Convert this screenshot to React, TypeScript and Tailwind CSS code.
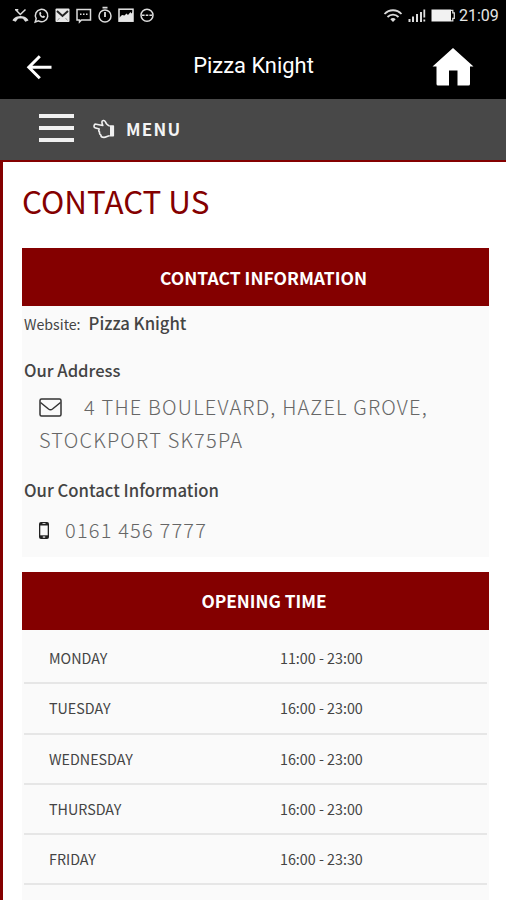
import React from 'react';

const openingTimes = [
  { day: 'MONDAY', hours: '11:00 - 23:00' },
  { day: 'TUESDAY', hours: '16:00 - 23:00' },
  { day: 'WEDNESDAY', hours: '16:00 - 23:00' },
  { day: 'THURSDAY', hours: '16:00 - 23:00' },
  { day: 'FRIDAY', hours: '16:00 - 23:30' },
];

function StatusIcons() {
  return (
    <svg width="146" height="20" viewBox="0 0 146 20" fill="none" stroke="#dcdcdc" strokeWidth="1.5">
      {/* missed call */}
      <path d="M3.500 4.500l4.800 5 5.200-5M3 4.800h3.300" />
      <path d="M.5 15.500c.3-1.500 3-4.500 8-4.500s7.700 3 8 4.500l-3.200 1.200-2.300-2.900c-1.500-.5-3.500-.5-5 0l-2.300 2.900z" fill="#dcdcdc" stroke="none" />
      {/* whatsapp */}
      <path d="M23.200 17l1-3.400a6.200 6.200 0 1 1 2.300 2.300z" />
      <path d="M27.300 7.500c-.5 3.300 2.300 6 5 5.300l.9-1.300-1.700-1-.8.700c-1-.4-1.600-1.100-1.900-2l.6-.8-.8-1.600z" fill="#dcdcdc" stroke="none" />
      {/* mail */}
      <rect x="43.500" y="3.500" width="14" height="13.500" rx="1" fill="#e6e6e6" stroke="none" />
      <path d="M45 6l5.500 5L56 6" stroke="#222" strokeWidth="2" />
      <path d="M45.500 15.500l2-2.500M55.500 15.500l-2-2.500" stroke="#999" strokeWidth="1" />
      {/* message */}
      <path d="M65 4.500h13.500v10.500H69.500l-2 2v-2H65z" />
      <path d="M68 9.300h1.500M71 9.300h1.500M74 9.300h1.500" />
      {/* timer */}
      <circle cx="93" cy="11" r="6" />
      <path d="M90.500 2.700h5M93 7v5" strokeWidth="1.800" />
      {/* picture */}
      <rect x="107" y="4.200" width="14" height="12" stroke="#e6e6e6" />
      <path d="M107 16v-3l3-3 2.500.5 2-2 1.500 1.500 2.500-3 .8 1.500L121 7v9z" fill="#e6e6e6" stroke="none" />
      {/* more */}
      <circle cx="135" cy="10.300" r="6" />
      <path d="M130 10.300h2.600M133.700 10.300h2.600M137.400 10.300h2.600" />
    </svg>
  );
}

function SignalIcons() {
  return (
    <svg width="74" height="20" viewBox="0 0 74 20" fill="none" stroke="#dcdcdc">
      <path d="M1.500 9c4.800-5 12.200-5 17 0M4.500 12c3.200-3.200 7.800-3.200 11 0" strokeWidth="1.800" />
      <path d="M7.300 14.300c1.600-1.600 3.800-1.600 5.400 0L10 17z" fill="#dcdcdc" stroke="none" />
      <path d="M26.500 17v-3M30 17v-5.500M34 17V9M38 17V7" strokeWidth="2" />
      <path d="M41.300 4.500v8M41.300 14.500v2" strokeWidth="1.800" />
      <rect x="48.500" y="4.500" width="19.500" height="12" fill="#f2f2f2" stroke="none" />
      <path d="M68 5.300h1.800v2.500h1.500v5.500h-1.500v2.500H68" strokeWidth="1.300" />
    </svg>
  );
}

export default function App() {
  return (
    <div className="h-[900px] w-full overflow-hidden bg-white font-['Noto_Sans_CJK_SC',sans-serif] text-[#444]">
      {/* Status bar + app bar */}
      <div className="h-[99px] bg-black text-white font-[Roboto,sans-serif]">
        <div className="h-8 flex items-center justify-between pl-3 pr-[7px] pb-[2px]">
          <StatusIcons />
          <div className="flex items-center">
            <SignalIcons />
            <span className="w-[42px] pt-[2px] pl-[2px] text-[16px] leading-5 text-[#e6e6e6] whitespace-nowrap">21:09</span>
          </div>
        </div>
        <div className="h-[67px] grid grid-cols-[100px_1fr_100px] items-center">
          <svg className="ml-[25px]" width="28" height="28" viewBox="0 0 28 28" fill="none" stroke="#fff" strokeWidth="3">
            <path d="M26.500 15.300H4M14.800 4.300L3.800 15.300l11 11" />
          </svg>
          <h1 className="pl-px text-center text-[21.900px] leading-7">Pizza Knight</h1>
          <svg className="ml-[26px]" width="42" height="40" viewBox="0 0 42 40" fill="#fff">
            <path d="M21 2L41.500 20.500H38V38q0 1.500-1.500 1.500H25.500V24.500h-8.500v15H6q-1.500 0-1.500-1.500V20.500H.5z" />
          </svg>
        </div>
      </div>

      {/* Menu bar */}
      <nav className="h-[61px] bg-[#484848] flex items-center pl-[39px] pb-[2px]">
        <div className="w-[35px] mb-px flex flex-col gap-2">
          <span className="h-1 bg-[#f0f0f0]" />
          <span className="h-1 bg-[#f0f0f0]" />
          <span className="h-1 bg-[#f0f0f0]" />
        </div>
        {/* pointing hand */}
        <svg className="ml-[19px]" width="22" height="20" viewBox="0 0 22 20" fill="none" stroke="#f0f0f0" strokeWidth="1.600" strokeLinejoin="round">
          <path d="M16.500 7c-2-.5-3.200-2-4.300-4.500-.7-1.600-3.400-1.300-3.300.6 0 1.300.5 2.400.9 3.400L3.200 5.200c-2.600-.3-3 3.200-.6 3.900l3.600 1c-.7 1.200-.4 2.300.4 3-.3 1.300.1 2.300 1.200 2.800 0 1.800 1.400 2.500 3.200 2.500 2.200 0 3.500-1.400 5.500-1.600" />
          <path d="M16.500 7h3.800v9.800h-3.800" />
          <path d="M17 7h3.300v9.800H17z" fill="#f0f0f0" stroke="none" />
        </svg>
        <span className="ml-[11px] text-[17px] leading-6 font-bold tracking-[1.300px] text-[#f4f4f4]">MENU</span>
      </nav>

      <main className="h-[740px] border-t-2 border-l-[3px] border-[#840000] pl-[19px] pr-[17px]">
        <h2 className="pt-4 text-[31.400px] leading-[46px] text-[#840000]">CONTACT US</h2>

        <h3 className="mt-6 h-[58px] bg-[#840000] text-white font-bold text-[17.500px] leading-[60px] text-center whitespace-nowrap pl-4">CONTACT INFORMATION</h3>
        <section className="h-[251px] bg-[#fafafa] pl-[2px]">
          <p className="h-9 flex items-baseline leading-[34px] text-[14.200px]">
            Website: <b className="ml-2 text-[16.700px] font-medium">Pizza Knight</b>
          </p>
          <h4 className="mt-[13px] text-[16.600px] leading-[30px] font-medium">Our Address</h4>
          <div className="pl-[15px] pt-[5px] text-[20px] leading-[33px] font-light tracking-[1.200px] text-[#666]">
            <svg className="inline-block align-[-2px] mr-[22px]" width="23" height="19" viewBox="0 0 23 19" fill="none" stroke="#333" strokeWidth="1.500">
              <rect x="1" y="1" width="21" height="17" rx="1.500" />
              <path d="M1.500 4.500l8 6.500q2 1.500 4 0l8-6.500" />
            </svg>
            4 THE BOULEVARD, HAZEL GROVE,<br />STOCKPORT SK75PA
          </div>
          <h4 className="mt-[19px] text-[16.700px] leading-[30px] font-medium">Our Contact Information</h4>
          <div className="pl-[15px] mt-2 flex items-center text-[20px] leading-[33px] font-light tracking-[1.200px] text-[#666]">
            <svg className="mt-px" width="10" height="17" viewBox="0 0 10 17">
              <rect width="10" height="17" rx="2" fill="#222" />
              <rect x="1.300" y="3.500" width="7.400" height="9.800" fill="#fafafa" />
              <rect x="3.800" y="14.300" width="2.400" height="1.500" fill="#ccc" />
              <rect x="3.500" y="1" width="3" height="1" fill="#ccc" />
            </svg>
            <span className="ml-4">0161 456 7777</span>
          </div>
        </section>

        <h3 className="mt-[15px] h-[58px] bg-[#840000] text-white font-bold text-[17.300px] leading-[58px] text-center whitespace-nowrap pl-[17px]">OPENING TIME</h3>
        <div className="h-[272px] bg-[#fafafa] px-[2px] pt-1 text-[14.300px]">
          {openingTimes.map((row) => (
            <div key={row.day} className="h-[50.300px] border-b-2 border-[#e6e6e6] grid grid-cols-[231px_1fr] pl-[25px] leading-[47px]">
              <span>{row.day}</span>
              <span>{row.hours}</span>
            </div>
          ))}
        </div>
      </main>
    </div>
  );
}
